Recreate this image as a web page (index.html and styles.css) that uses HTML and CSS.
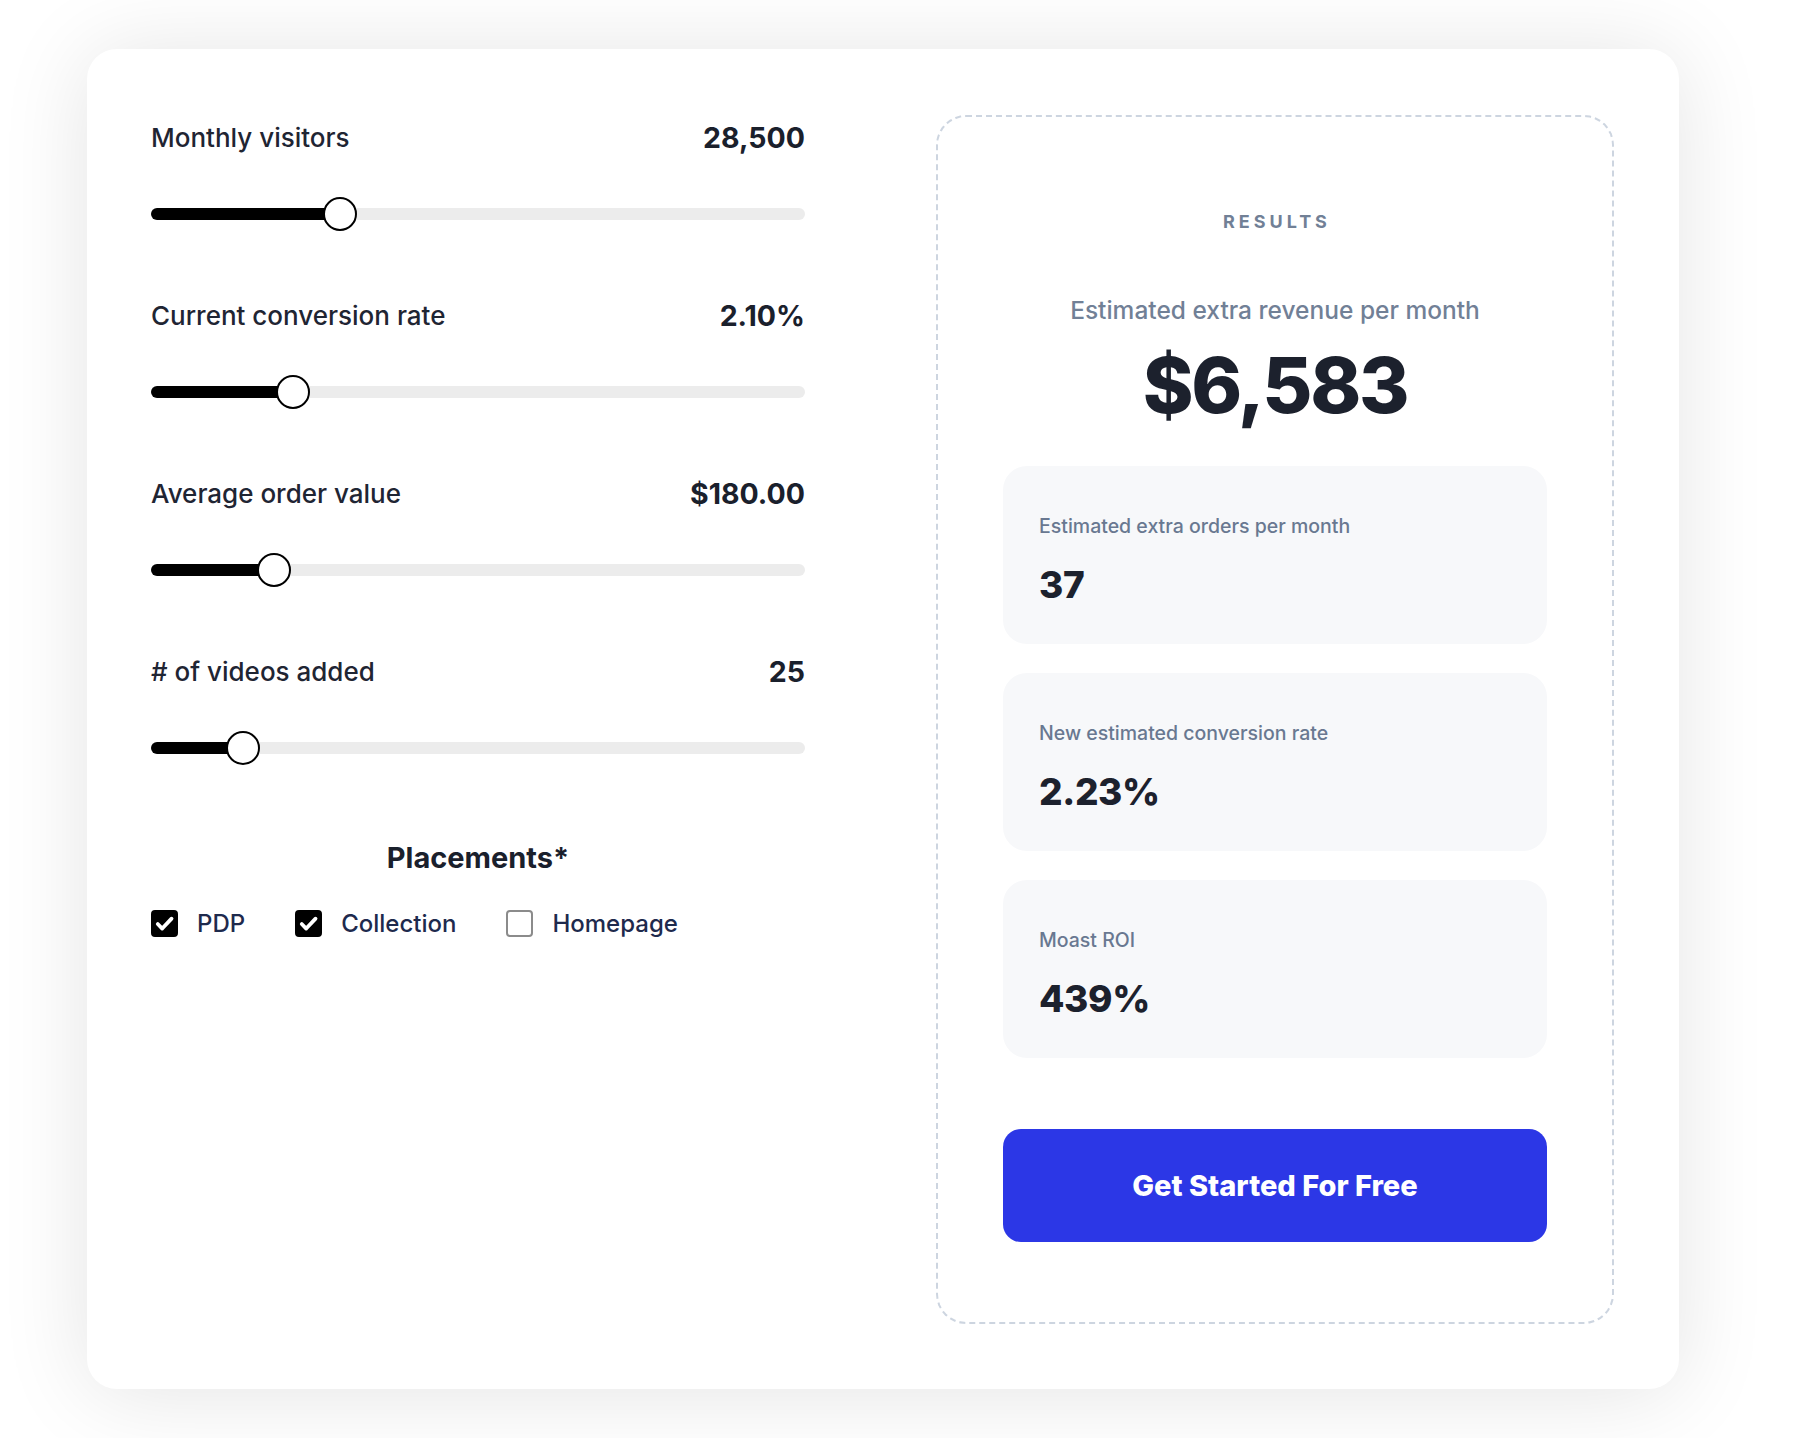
FILE: index.html
```html
<!DOCTYPE html>
<html lang="en">
<head>
    <meta charset="UTF-8">
    <meta name="viewport" content="width=device-width, initial-scale=1.0">
    <title>ROI Calculator</title>
    <link rel="stylesheet" href="styles.css">
</head>
<body>
    <div class="page">
        <div class="calc">
            <div class="inputs">
                <div class="field">
                    <div class="field-head">
                        <span class="field-label">Monthly visitors</span>
                        <span class="field-value">28,500</span>
                    </div>
                    <input class="slider" type="range" min="1000" max="100000" step="500" value="28500" style="--p: 0.2795">
                </div>

                <div class="field">
                    <div class="field-head">
                        <span class="field-label">Current conversion rate</span>
                        <span class="field-value">2.10%</span>
                    </div>
                    <input class="slider" type="range" min="0.1" max="10" step="0.01" value="2.1" style="--p: 0.2036">
                </div>

                <div class="field">
                    <div class="field-head">
                        <span class="field-label">Average order value</span>
                        <span class="field-value">$180.00</span>
                    </div>
                    <input class="slider" type="range" min="10" max="1000" step="1" value="180" style="--p: 0.1729">
                </div>

                <div class="field">
                    <div class="field-head">
                        <span class="field-label"># of videos added</span>
                        <span class="field-value">25</span>
                    </div>
                    <input class="slider" type="range" min="1" max="200" step="1" value="25" style="--p: 0.1228">
                </div>

                <div class="placements">
                    <h3 class="placements-title">Placements*</h3>
                    <div class="options">
                        <label class="option">
                            <input type="checkbox" checked>
                            <span class="box"><svg viewBox="0 0 26 26" width="27" height="27"><path d="M6.5 13.5l4.3 4.4L19.8 8.3" fill="none" stroke="#fff" stroke-width="3.6" stroke-linecap="round" stroke-linejoin="round"/></svg></span>
                            PDP
                        </label>
                        <label class="option">
                            <input type="checkbox" checked>
                            <span class="box"><svg viewBox="0 0 26 26" width="27" height="27"><path d="M6.5 13.5l4.3 4.4L19.8 8.3" fill="none" stroke="#fff" stroke-width="3.6" stroke-linecap="round" stroke-linejoin="round"/></svg></span>
                            Collection
                        </label>
                        <label class="option">
                            <input type="checkbox">
                            <span class="box"><svg viewBox="0 0 26 26" width="27" height="27"><path d="M6.5 13.5l4.3 4.4L19.8 8.3" fill="none" stroke="#fff" stroke-width="3.6" stroke-linecap="round" stroke-linejoin="round"/></svg></span>
                            Homepage
                        </label>
                    </div>
                </div>
            </div>

            <div class="results">
                <div class="results-kicker">RESULTS</div>
                <div class="revenue-label">Estimated extra revenue per month</div>
                <div class="revenue-value">$6,583</div>

                <div class="stat-list">
                    <div class="stat">
                        <div class="stat-label">Estimated extra orders per month</div>
                        <div class="stat-value">37</div>
                    </div>
                    <div class="stat">
                        <div class="stat-label">New estimated conversion rate</div>
                        <div class="stat-value">2.23%</div>
                    </div>
                    <div class="stat">
                        <div class="stat-label">Moast ROI</div>
                        <div class="stat-value">439%</div>
                    </div>
                </div>

                <button class="cta">Get Started For Free</button>
            </div>
        </div>
    </div>
</body>
</html>
```

FILE: styles.css
```css
body {
    margin: 0;
    background: #fff;
    font-family: Inter, "Noto Sans", sans-serif;
    color: #1f2533;
}
.page {
    padding: 49px 0 49px 87px;
}
.calc {
    width: 1592px;
    box-sizing: border-box;
    display: flex;
    gap: 131px;
    padding: 66px 65px 65px 64px;
    background: #fff;
    border-radius: 30px;
    box-shadow: 0 4px 90px rgba(0,0,0,0.11);
}
.inputs {
    width: 654px;
    padding-top: 8px;
}
.field {
    margin-bottom: 70px;
}
.field-head {
    display: flex;
    justify-content: space-between;
    align-items: center;
    height: 30px;
    line-height: 30px;
}
.field-label {
    font-size: 26px;
    font-weight: 500;
    color: #1f2533;
}
.field-value {
    font-size: 28.5px;
    font-weight: 700;
    color: #1a202c;
}
.slider {
    -webkit-appearance: none;
    appearance: none;
    display: block;
    width: 100%;
    height: 34px;
    margin: 44px 0 0;
    background: transparent;
}
.slider::-webkit-slider-runnable-track {
    height: 12px;
    border-radius: 6px;
    background: linear-gradient(to right, #000 calc(17px + var(--p) * (100% - 34px)), #ececec calc(17px + var(--p) * (100% - 34px)));
}
.slider::-webkit-slider-thumb {
    -webkit-appearance: none;
    appearance: none;
    box-sizing: border-box;
    width: 34px;
    height: 34px;
    margin-top: -11px;
    border-radius: 50%;
    background: #fff;
    border: 2.5px solid #000;
}
.placements {
    padding-top: 6px;
}
.placements-title {
    margin: 0;
    text-align: center;
    font-size: 29px;
    font-weight: 700;
    line-height: 34px;
    color: #1a202c;
}
.options {
    display: flex;
    gap: 50px;
    margin-top: 35px;
}
.option {
    display: flex;
    align-items: center;
    gap: 19px;
    font-size: 24px;
    font-weight: 500;
    color: #1e2a4d;
    line-height: 27px;
}
.option input {
    display: none;
}
.box {
    box-sizing: border-box;
    width: 27px;
    height: 27px;
    border-radius: 4px;
    border: 2px solid #8b8b8b;
    background: #fff;
    overflow: hidden;
}
.box svg {
    display: block;
    margin: -2px;
    visibility: hidden;
}
.option input:checked + .box {
    background: #000;
    border-color: #000;
}
.option input:checked + .box svg {
    visibility: visible;
}
.results {
    width: 678px;
    box-sizing: border-box;
    border: 2px dashed #cdd5e0;
    border-radius: 30px;
    padding: 94px 65px 80px;
    text-align: center;
}
.results-kicker {
    font-size: 18px;
    font-weight: 700;
    line-height: 22px;
    letter-spacing: 0.22em;
    padding-left: 0.22em;
    color: #718096;
}
.revenue-label {
    margin-top: 63px;
    font-size: 24.5px;
    font-weight: 500;
    line-height: 28px;
    color: #718096;
}
.revenue-value {
    margin-top: 18px;
    font-size: 77px;
    font-weight: 800;
    line-height: 86px;
    letter-spacing: -0.03em;
    color: #1c212d;
}
.stat-list {
    display: flex;
    flex-direction: column;
    gap: 29px;
    margin-top: 38px;
}
.stat {
    height: 178px;
    box-sizing: border-box;
    padding: 48px 36px 0;
    background: #f7f8fa;
    border-radius: 24px;
    text-align: left;
}
.stat-label {
    font-size: 19.5px;
    font-weight: 500;
    line-height: 24px;
    color: #697891;
}
.stat-value {
    margin-top: 23px;
    font-size: 37px;
    font-weight: 800;
    line-height: 48px;
    letter-spacing: -0.01em;
    color: #1c212d;
}
.cta {
    display: block;
    width: 100%;
    height: 113px;
    margin-top: 71px;
    border: none;
    border-radius: 18px;
    background: #2c37e6;
    color: #fff;
    font-family: inherit;
    font-size: 29px;
    font-weight: 800;
    cursor: pointer;
}
```
